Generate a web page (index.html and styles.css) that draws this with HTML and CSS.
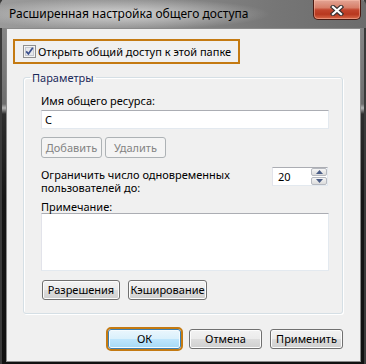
FILE: index.html
```html
<!DOCTYPE html>
<html lang="ru">
<head>
<meta charset="utf-8">
<title>Расширенная настройка общего доступа</title>
<link rel="stylesheet" href="styles.css">
</head>
<body>
<div class="window">
  <div class="titlebar">
    <span class="title">Расширенная настройка общего доступа</span>
    <div class="close">
      <svg width="14" height="11" viewBox="0 0 14 11">
        <path d="M3 2 L11 9 M11 2 L3 9" stroke="#3a3232" stroke-width="4.4" stroke-linecap="square" fill="none"/>
        <path d="M3 2 L11 9 M11 2 L3 9" stroke="#ffffff" stroke-width="2.2" stroke-linecap="square" fill="none"/>
      </svg>
    </div>
  </div>
  <div class="client">
    <div class="share-toggle">
      <span class="checkbox">
        <svg width="13" height="13" viewBox="0 0 13 13">
          <rect x="0.5" y="0.5" width="12" height="12" fill="#f4f4f4" stroke="#8f8f8f"/>
          <rect x="2.5" y="2.5" width="8" height="8" fill="#e6e8ec" stroke="#c4c8d0"/>
          <path d="M3.2 6.4 L5.4 8.9 L9.8 2.8" stroke="#3b4f8c" stroke-width="1.7" fill="none"/>
        </svg>
      </span>
      <span>Открыть общий доступ к этой папке</span>
    </div>

    <fieldset class="group">
      <legend class="group-title">Параметры</legend>
      <div class="label label-first">Имя общего ресурса:</div>
      <div class="textbox">C</div>
      <div class="btn-row">
        <button class="btn btn-disabled btn-small" disabled>Добавить</button>
        <button class="btn btn-disabled btn-small" disabled>Удалить</button>
      </div>
      <div class="limit-row">
        <div class="label label-limit">Ограничить число одновременных<br>пользователей до:</div>
        <div class="spin">
          <span class="spin-value">20</span>
          <span class="spin-buttons">
            <span class="spin-btn">
              <svg width="7" height="4" viewBox="0 0 7 4"><path d="M0 4 L3.5 0 L7 4 Z" fill="#4a5d86"/></svg>
            </span>
            <span class="spin-btn">
              <svg width="7" height="4" viewBox="0 0 7 4"><path d="M0 0 L3.5 4 L7 0 Z" fill="#4a5d86"/></svg>
            </span>
          </span>
        </div>
      </div>
      <div class="label label-note">Примечание:</div>
      <div class="textarea"></div>
      <div class="btn-row btn-row-wide">
        <button class="btn btn-perm">Разрешения</button>
        <button class="btn btn-cache">Кэширование</button>
      </div>
    </fieldset>

    <div class="footer">
      <button class="btn btn-footer btn-ok">ОК</button>
      <button class="btn btn-footer">Отмена</button>
      <button class="btn btn-footer">Применить</button>
    </div>
  </div>
</div>
</body>
</html>
```

FILE: styles.css
```css
* { box-sizing: border-box; }

html, body {
  margin: 0;
  padding: 0;
}

body {
  width: 366px;
  height: 364px;
  overflow: hidden;
  font-family: "Noto Sans", "DejaVu Sans", sans-serif;
  font-size: 11px;
  color: #000;
  background: #111;
}

.window {
  width: 366px;
  height: 364px;
  display: flex;
  flex-direction: column;
  background:
    linear-gradient(90deg, #3a3a3a 0, #3a3a3a 2px, transparent 2px, transparent 364px, #3a3a3a 364px),
    linear-gradient(180deg, #8e8e8e 0, #7c7c7c 60px, #6e6e6e 104px, #b4b4b4 108px, #2e2e2e 114px, #161616 200px, #111 100%);
}

/* ---------- title bar ---------- */
.titlebar {
  height: 28px;
  display: flex;
  align-items: flex-start;
  border-radius: 5px 5px 0 0;
  background:
    radial-gradient(ellipse 150px 16px at 120px 14px, rgba(235, 235, 235, 0.75), rgba(235, 235, 235, 0) 100%),
    linear-gradient(90deg, #9a9a9a 0, #8c8c8c 40%, #767676 75%, #6c6c6c 100%);
}

.title {
  padding: 6px 0 0 9px;
  line-height: 15px;
  font-size: 12px;
  color: #000;
  white-space: nowrap;
}

.close {
  margin-left: auto;
  margin-right: 5px;
  width: 48px;
  height: 20px;
  display: flex;
  align-items: center;
  justify-content: center;
  padding-top: 1px;
  border: 1px solid #4a1a12;
  border-top: none;
  border-radius: 0 0 5px 5px;
  background: linear-gradient(180deg, #e3a595 0%, #d77f69 40%, #c2452d 52%, #b8381f 75%, #d8694a 100%);
  box-shadow: inset 0 0 0 1px rgba(255, 200, 180, 0.45);
}

/* ---------- client area ---------- */
.client {
  flex: 1;
  margin: 0 5px 2px 6px;
  border: 1px solid #8a8a8a;
  background: #f0f0f0;
  display: flex;
  flex-direction: column;
  align-items: stretch;
}

.share-toggle {
  margin: 10px 0 0 6px;
  width: 227px;
  height: 25px;
  border: 2px solid #c47a12;
  display: flex;
  align-items: center;
  padding-left: 8px;
  white-space: nowrap;
  line-height: 15px;
}

.checkbox {
  width: 13px;
  height: 13px;
  margin-right: 2px;
  display: block;
  flex: none;
}

.checkbox svg { display: block; }

/* ---------- group box ---------- */
.group {
  margin: 6px 17px 0 16px;
  padding: 0 13px 13px 17px;
  border: 1px solid #d5dfe5;
  border-radius: 3px;
  box-shadow: inset 1px 1px 0 #fff, 1px 1px 0 #fff;
  min-width: 0;
}

.group-title {
  margin-left: -11px;
  padding: 0 2px;
  line-height: 15px;
  color: #1b2a5a;
}

.label {
  white-space: nowrap;
}

.label-first {
  margin-top: 8px;
  line-height: 15px;
}

.textbox {
  margin-top: 2px;
  height: 19px;
  background: #fff;
  border: 1px solid #e3e9ef;
  border-top-color: #abadb3;
  border-left-color: #e2e3ea;
  padding: 1px 0 0 3px;
  line-height: 15px;
}

.btn-row {
  display: flex;
  gap: 3px;
  margin-top: 8px;
}

.btn {
  font-family: inherit;
  font-size: 11px;
  color: #000;
  height: 21px;
  padding: 0;
  line-height: 17px;
  border: 1px solid #707070;
  border-radius: 3px;
  background: linear-gradient(180deg, #f2f2f2 0%, #ebebeb 50%, #dddddd 50%, #cfcfcf 100%);
  box-shadow: inset 0 0 0 1px #fcfcfc;
  text-align: center;
  white-space: nowrap;
}

.btn-small { width: 61px; }

.btn-disabled {
  color: #838383;
  border-color: #adb2b5;
  background: #f4f4f4;
  box-shadow: none;
}

.limit-row {
  margin-top: 9px;
  display: flex;
  justify-content: space-between;
  align-items: flex-start;
}

.label-limit {
  padding-top: 1px;
  line-height: 13px;
}

.spin {
  width: 56px;
  height: 19px;
  margin-right: 1px;
  background: #fff;
  border: 1px solid #e3e9ef;
  border-top-color: #abadb3;
  border-left-color: #e2e3ea;
  display: flex;
  align-items: stretch;
}

.spin-value {
  flex: 1;
  padding: 1px 0 0 5px;
  line-height: 15px;
}

.spin-buttons {
  width: 16px;
  display: flex;
  flex-direction: column;
  gap: 1px;
}

.spin-btn {
  flex: 1;
  display: flex;
  align-items: center;
  justify-content: center;
  border: 1px solid #b6b9c0;
  border-radius: 2px;
  background: linear-gradient(180deg, #f6f6f6 0%, #e8e8e8 50%, #dcdcdc 100%);
}

.spin-btn svg { display: block; }

.label-note {
  margin-top: 6px;
  line-height: 13px;
}

.textarea {
  height: 58px;
  background: #fff;
  border: 1px solid #e3e9ef;
  border-top-color: #abadb3;
  border-left-color: #e2e3ea;
}

.btn-row-wide {
  margin-top: 9px;
  gap: 8px;
  padding-left: 1px;
}

.btn-perm { width: 78px; height: 20px; line-height: 16px; }
.btn-cache { width: 79px; height: 20px; line-height: 16px; }

/* ---------- footer ---------- */
.footer {
  margin-top: 15px;
  padding-right: 17px;
  display: flex;
  justify-content: flex-end;
  gap: 8px;
}

.btn-footer {
  width: 73px;
  height: 20px;
  line-height: 16px;
}

.btn-ok {
  border-color: #3c7fb1;
  background: linear-gradient(180deg, #eaf6fd 0%, #d9f0fc 50%, #bee6fd 50%, #a7d9f5 100%);
  box-shadow: inset 0 0 0 1px #f4fbff;
  outline: 2px solid #c47a12;
  outline-offset: 0;
}
```
